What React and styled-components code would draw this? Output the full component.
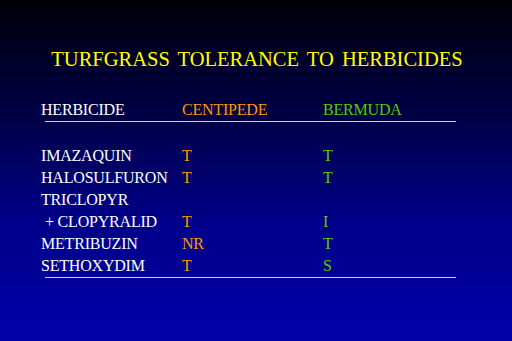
import styled, { createGlobalStyle } from "styled-components";

const rows = [
  { name: "IMAZAQUIN", centipede: "T", bermuda: "T" },
  { name: "HALOSULFURON", centipede: "T", bermuda: "T" },
  { name: "TRICLOPYR", centipede: "", bermuda: "" },
  { name: "+ CLOPYRALID", centipede: "T", bermuda: "I", indent: true },
  { name: "METRIBUZIN", centipede: "NR", bermuda: "T" },
  { name: "SETHOXYDIM", centipede: "T", bermuda: "S" },
];

const GlobalStyle = createGlobalStyle`
  html, body {
    margin: 0;
    padding: 0;
    background: #0000a8;
  }
`;

export default function App() {
  return (
    <>
      <GlobalStyle />
      <Slide>
        <Title>TURFGRASS TOLERANCE TO HERBICIDES</Title>
        <Table>
          <Row>
            <Cell $color="#ffffff">HERBICIDE</Cell>
            <Cell $color="#ff9900">CENTIPEDE</Cell>
            <Cell $color="#55cc00">BERMUDA</Cell>
          </Row>
          <Rule />
          <Body>
            {rows.map((r, i) => (
              <Row key={i}>
                <Cell $color="#ffffff" $indent={r.indent}>
                  {r.name}
                </Cell>
                <Cell $color="#ff9900">{r.centipede}</Cell>
                <Cell $color="#55cc00">{r.bermuda}</Cell>
              </Row>
            ))}
          </Body>
          <Rule />
        </Table>
      </Slide>
    </>
  );
}

const Slide = styled.div`
  width: 512px;
  height: 341px;
  box-sizing: border-box;
  padding-top: 47px;
  display: flex;
  flex-direction: column;
  background: linear-gradient(to bottom, #00000a 0%, #000048 35%, #00008a 65%, #0000a8 100%);
  font-family: "Liberation Serif", "Times New Roman", serif;
  overflow: hidden;
`;

const Title = styled.div`
  text-align: center;
  color: #ffff00;
  font-size: 20.5px;
  line-height: 24px;
  word-spacing: 3px;
  padding-left: 2px;
`;

const Table = styled.div`
  margin-top: 28px;
  margin-left: 41px;
  width: 415px;
  display: flex;
  flex-direction: column;
`;

const Body = styled.div`
  margin-top: 23px;
  display: flex;
  flex-direction: column;
`;

const Row = styled.div`
  display: grid;
  grid-template-columns: 141px 141px 1fr;
  height: 22px;
  line-height: 22px;
  font-size: 16px;
  letter-spacing: -0.2px;
`;

const Cell = styled.div`
  color: ${(p) => p.$color};
  white-space: nowrap;
  padding-left: ${(p) => (p.$indent ? "4px" : "0")};
`;

const Rule = styled.div`
  margin-left: 4px;
  width: 411px;
  height: 1px;
  background: #ccccff;
`;
